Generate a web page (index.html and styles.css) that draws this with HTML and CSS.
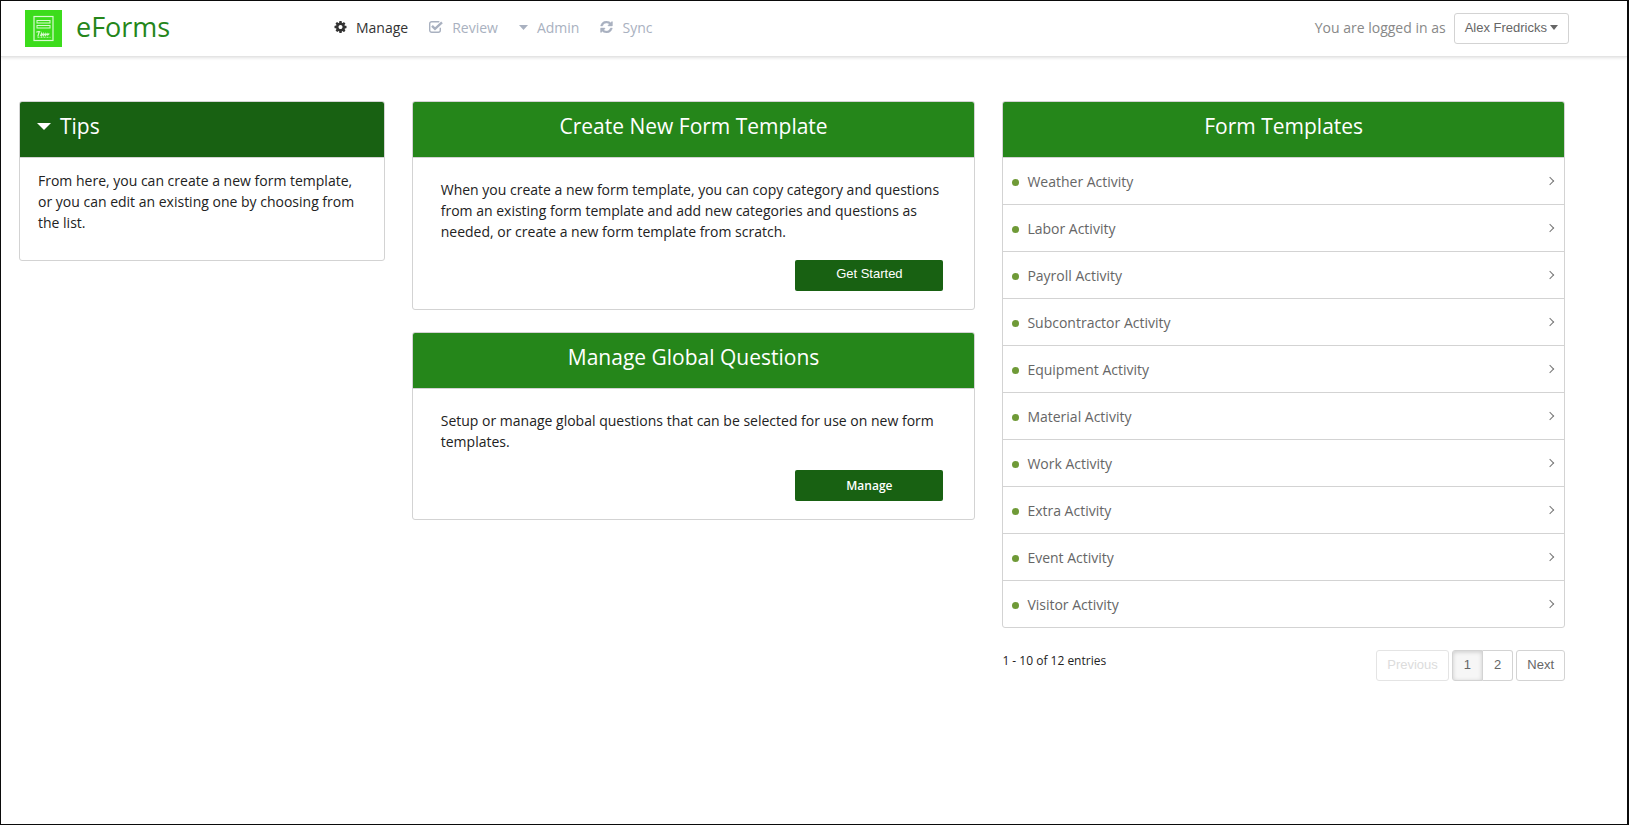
FILE: index.html
```html
<!DOCTYPE html>
<html lang="en">
<head>
<meta charset="utf-8">
<title>eForms</title>
<link rel="stylesheet" href="styles.css">
</head>
<body>
<div class="page">
  <header class="topbar">
    <a class="brand" href="#">
      <svg class="brand-logo" viewBox="0 0 37 37" aria-hidden="true">
        <rect width="37" height="37" fill="#3cdc1c"/>
        <g fill="none" stroke="#d8fbd0">
          <rect x="9" y="6.500" width="19" height="24" stroke-width="1.200"/>
          <rect x="12" y="10.500" width="13" height="2.500"/>
          <rect x="12" y="15.500" width="13" height="2.500"/>
          <path d="M11.300 22.300q2-1.300 4-.5M14.300 21.500l-1.500 5M15.500 26l1-2.500.3 2.200 1.400-2.200.4 2.200 1.600-2.200.4 2 1.500-2 .6 1.500 1.600-1.500" stroke-width="1.100"/>
          <path d="M12.500 27.300h13" stroke-width=".8" stroke-dasharray="2 1"/>
        </g>
      </svg>
      <span class="brand-name">eForms</span>
    </a>
    <nav class="nav">
      <a class="nav-link is-active" href="#">
        <svg class="icon" viewBox="0 0 1536 1536" aria-hidden="true"><path fill="currentColor" d="M1024 768q0-106-75-181t-181-75-181 75-75 181 75 181 181 75 181-75 75-181zm512-109v222q0 12-8 23t-20 13l-185 28q-19 54-39 91 35 50 107 138 10 12 10 25t-9 23q-27 37-99 108t-94 71q-12 0-26-9l-138-108q-44 23-91 38-16 136-29 186-7 28-36 28h-222q-14 0-24.500-8.500t-11.500-21.500l-28-184q-49-16-90-37l-141 107q-10 9-25 9-14 0-25-11-126-114-165-168-7-10-7-23 0-12 8-23 15-21 51-66.500t54-70.500q-27-50-41-99l-183-27q-13-2-21-12.500t-8-23.500v-222q0-12 8-23t19-13l186-28q14-46 39-92-40-57-107-138-10-12-10-24 0-10 9-23 26-36 98.500-107.500t94.500-71.500q13 0 26 10l138 107q44-23 91-38 16-136 29-186 7-28 36-28h222q14 0 24.500 8.500t11.500 21.500l28 184q49 16 90 37l142-107q9-9 24-9 13 0 25 10 129 119 165 170 7 8 7 22 0 12-8 23-15 21-51 66.500t-54 70.500q26 50 41 98l183 28q13 2 21 12.500t8 23.500z"/></svg>
        Manage
      </a>
      <a class="nav-link" href="#">
        <svg class="icon icon-check" viewBox="0 0 14 12" aria-hidden="true"><path fill="none" stroke="currentColor" stroke-width="1.400" d="M11.300 6.800v2.500a2 2 0 0 1-2 2H2.700a2 2 0 0 1-2-2V2.700a2 2 0 0 1 2-2h6.600q.6 0 1 .2"/><path fill="none" stroke="currentColor" stroke-width="2.400" d="M3 4.800l3 3L13 1.300"/></svg>
        Review
      </a>
      <a class="nav-link" href="#">
        <svg class="caret" viewBox="0 0 9 5" aria-hidden="true"><path fill="currentColor" d="M0 0h9L4.500 5z"/></svg>
        Admin
      </a>
      <a class="nav-link" href="#">
        <svg class="icon" viewBox="0 0 1536 1536" aria-hidden="true"><path fill="currentColor" stroke="currentColor" stroke-width="50" d="M1511 928q0 5-1 7-64 268-268 434.500T764 1536q-146 0-282.500-55T238 1324l-129 129q-19 19-45 19t-45-19-19-45V960q0-26 19-45t45-19h448q26 0 45 19t19 45-19 45l-137 137q71 66 161 102t187 36q134 0 250-65t186-179q11-17 53-117 8-23 30-23h192q13 0 22.500 9.500t9.500 22.500zm25-800v448q0 26-19 45t-45 19h-448q-26 0-45-19t-19-45 19-45l138-138Q969 256 768 256q-134 0-250 65T332 500q-11 17-53 117-8 23-30 23H50q-13 0-22.500-9.500T18 608v-7q65-268 270-434.500T768 0q146 0 284 55.500T1297 212l130-129q19-19 45-19t45 19 19 45z"/></svg>
        Sync
      </a>
    </nav>
    <div class="account">
      <span class="account-label">You are logged in as</span>
      <button class="btn" type="button">Alex Fredricks
        <svg class="caret caret-small" viewBox="0 0 8 5" aria-hidden="true"><path fill="currentColor" d="M0 0h8L4 5z"/></svg>
      </button>
    </div>
  </header>

  <main class="columns">
    <section class="card">
      <h2 class="card-title card-title-tips">
        <svg class="caret caret-large" viewBox="0 0 14 7" aria-hidden="true"><path fill="currentColor" d="M0 0h14L7 7z"/></svg>
        Tips
      </h2>
      <p class="tips-text">From here, you can create a new form template, or you can edit an existing one by choosing from the list.</p>
    </section>

    <div class="stack">
      <section class="card">
        <h2 class="card-title">Create New Form Template</h2>
        <div class="card-body">
          <p>When you create a new form template, you can copy category and questions from an existing form template and add new categories and questions as needed, or create a new form template from scratch.</p>
          <button class="btn-primary btn-start" type="button">Get Started</button>
        </div>
      </section>
      <section class="card">
        <h2 class="card-title">Manage Global Questions</h2>
        <div class="card-body">
          <p>Setup or manage global questions that can be selected for use on new form templates.</p>
          <button class="btn-primary" type="button">Manage</button>
        </div>
      </section>
    </div>

    <div>
      <section class="card">
        <h2 class="card-title">Form Templates</h2>
        <ul class="templates">
          <li><a class="template" href="#">Weather Activity</a></li>
          <li><a class="template" href="#">Labor Activity</a></li>
          <li><a class="template" href="#">Payroll Activity</a></li>
          <li><a class="template" href="#">Subcontractor Activity</a></li>
          <li><a class="template" href="#">Equipment Activity</a></li>
          <li><a class="template" href="#">Material Activity</a></li>
          <li><a class="template" href="#">Work Activity</a></li>
          <li><a class="template" href="#">Extra Activity</a></li>
          <li><a class="template" href="#">Event Activity</a></li>
          <li><a class="template" href="#">Visitor Activity</a></li>
        </ul>
      </section>
      <div class="pager">
        <span class="pager-info">1 - 10 of 12 entries</span>
        <div class="pager-buttons">
          <button class="btn" type="button" disabled>Previous</button>
          <div class="pages">
            <button class="btn is-current" type="button" aria-current="page">1</button>
            <button class="btn" type="button">2</button>
          </div>
          <button class="btn" type="button">Next</button>
        </div>
      </div>
    </div>
  </main>
</div>
</body>
</html>
```
FILE: styles.css
```css
* {
  box-sizing: border-box;
}

body {
  margin: 0;
  background: #fff;
  color: #222;
  font-family: "Open Sans", "Noto Sans", sans-serif;
  font-size: 14px;
  line-height: 21px;
}

h2,
p,
ul {
  margin: 0;
  padding: 0;
}

a {
  color: inherit;
  text-decoration: none;
}

svg {
  display: block;
  flex: none;
}

.page {
  min-height: 100vh;
  border: 1px solid #0b0b0b;
  border-right-width: 2px;
}

/* Top bar */
.topbar {
  display: flex;
  align-items: center;
  height: 56px;
  padding: 0 58px 0 24px;
  border-bottom: 1px solid #e4e4e4;
  box-shadow: 0 1px 3px rgba(0, 0, 0, 0.12);
}

.brand {
  display: flex;
  align-items: center;
  gap: 14px;
  width: 309px;
  color: #25861a;
  font-size: 27px;
  line-height: 36px;
}

.brand-logo {
  width: 37px;
  height: 37px;
}

.brand-name {
  padding-bottom: 4px;
}

.nav {
  display: flex;
  gap: 21px;
  padding-bottom: 3px;
}

.nav-link {
  display: flex;
  align-items: center;
  gap: 9px;
  color: #a9b1c0;
}

.nav-link.is-active {
  color: #333;
}

.icon {
  width: 13px;
  height: 12px;
}

.icon-check {
  width: 14px;
}

.caret {
  width: 9px;
  height: 5px;
}

.account {
  display: flex;
  align-items: center;
  gap: 8px;
  margin-left: auto;
  padding-bottom: 1px;
  color: #888;
}

.account-label {
  padding-bottom: 2px;
}

.btn {
  display: inline-flex;
  align-items: center;
  height: 31px;
  padding: 0 10px 2px;
  border: 1px solid #d3d3d3;
  border-radius: 3px;
  background: #fff;
  color: #666;
  font-family: "Liberation Sans", Arial, sans-serif;
  font-size: 13px;
}

.btn:disabled {
  border-color: #e4e4e4;
  color: #dcdcdc;
}

.caret-small {
  width: 8px;
  margin-left: 3px;
}

/* Columns */
.columns {
  display: grid;
  grid-template-columns: 366fr 564fr 563fr;
  align-items: start;
  gap: 27px;
  padding: 44px 62px 40px 18px;
}

.stack {
  display: grid;
  gap: 22px;
}

.card {
  overflow: hidden;
  border: 1px solid #d3d3d3;
  border-radius: 3px;
}

.card-title {
  padding: 10px 17px 17px;
  border-bottom: 1px solid #d3d3d3;
  background: #25861a;
  color: #fff;
  font-size: 21px;
  font-weight: 400;
  line-height: 28px;
  text-align: center;
}

.card-title-tips {
  display: flex;
  align-items: center;
  gap: 9px;
  background: #186112;
}

.caret-large {
  width: 14px;
  height: 7px;
}

.tips-text {
  padding: 12px 18px 27px;
}

.card-body {
  display: grid;
  gap: 18px;
  padding: 21px 31px 18px 28px;
}

.btn-primary {
  justify-self: end;
  width: 148px;
  height: 31px;
  padding: 0;
  border: 0;
  border-radius: 2px;
  background: #186112;
  color: #fff;
  font-family: "Open Sans", "Noto Sans", sans-serif;
  font-size: 12px;
  font-weight: 600;
}

.btn-start {
  padding-bottom: 4px;
  font-family: "Liberation Sans", Arial, sans-serif;
  font-size: 13px;
  font-weight: 400;
}

/* Template list */
.templates {
  list-style: none;
}

.templates li + li {
  border-top: 1px solid #d3d3d3;
}

.template {
  display: flex;
  align-items: center;
  height: 46px;
  padding: 0 9px;
  color: #666;
}

.template::before {
  width: 7px;
  height: 7px;
  margin: 2px 8px 0 0;
  border-radius: 50%;
  background: #6f9a37;
  content: "";
}

.template::after {
  width: 5px;
  height: 5px;
  margin: 0 2px 0 auto;
  border: solid #777;
  border-width: 1px 1px 0 0;
  transform: rotate(45deg);
  content: "";
}

/* Pager */
.pager {
  display: flex;
  justify-content: space-between;
  padding-top: 22px;
}

.pager-info {
  font-size: 12px;
}

.pager-buttons {
  display: flex;
  gap: 3px;
}

.pages {
  display: flex;
}

.pages .btn {
  padding: 0 11px 2px;
}

.pages .btn:first-child {
  border-radius: 3px 0 0 3px;
}

.pages .btn:last-child {
  border-left: 0;
  border-radius: 0 3px 3px 0;
}

.btn.is-current {
  background: #f6f6f6;
  box-shadow: inset 0 1px 4px rgba(0, 0, 0, 0.18);
}
```
